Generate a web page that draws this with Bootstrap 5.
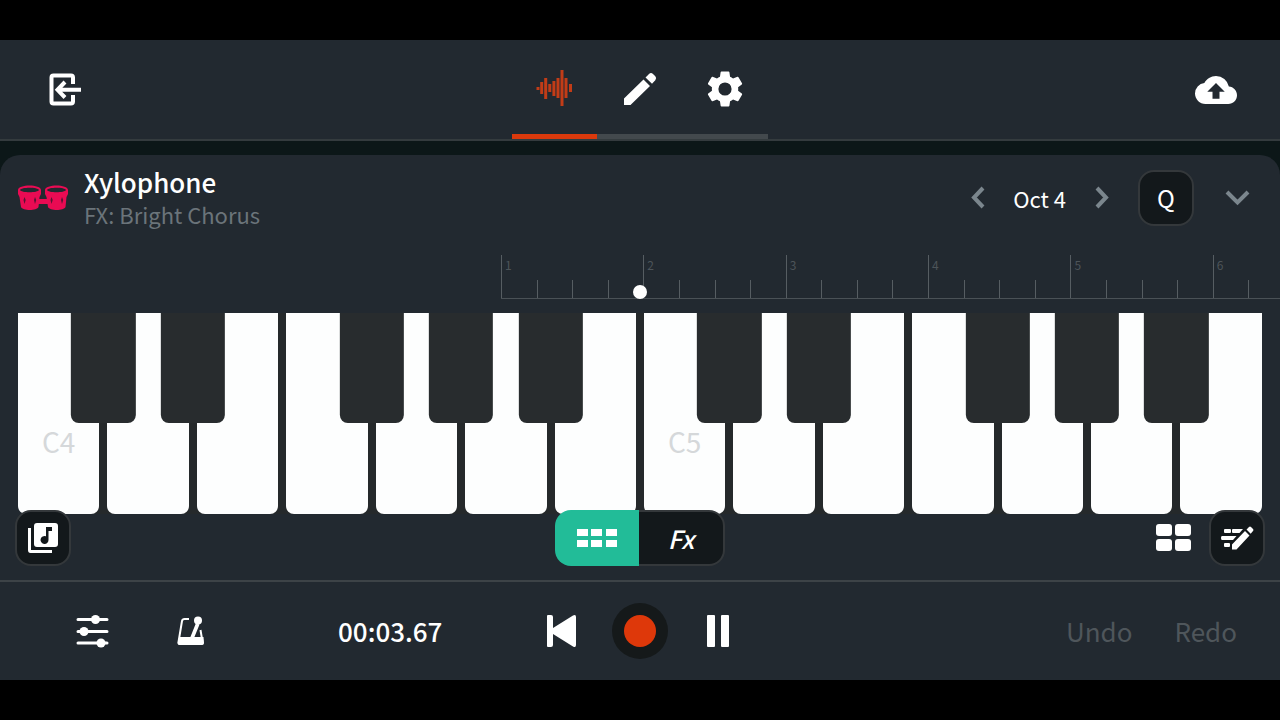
<!DOCTYPE html>
<html lang="en">
<head>
<meta charset="utf-8">
<meta name="viewport" content="width=device-width, initial-scale=1">
<title>Xylophone – Studio</title>
<link href="https://cdn.jsdelivr.net/npm/bootstrap@5.3.0/dist/css/bootstrap.min.css" rel="stylesheet">
<script src="https://cdn.jsdelivr.net/npm/bootstrap@5.3.0/dist/js/bootstrap.bundle.min.js" defer></script>
<style>
  :root { --surface: #222930; --line: #3d4347; --ink: #13181b; --muted: #7b868d; }
  body { background: #000; color: #fff; font-family: "Noto Sans CJK SC", "Noto Sans", sans-serif; line-height: 32px; }
  svg { display: block; fill: currentColor; }
  svg.stroked { fill: none; stroke: currentColor; stroke-width: 4px; }
  .studio { background: #0c1718; }
  .bare { background: none; border: 0; padding: 0; color: inherit; display: flex; align-items: center; justify-content: center; }
  .edge { flex: 1 1 0; }

  .topbar { height: 101px; padding: 0 43px; background: var(--surface); border-bottom: 2px solid #343b3e; }
  .tabs { width: 256px; align-self: stretch; }
  .tabs .bare { flex: 1 1 0; padding-top: 4px; border-bottom: 5px solid #43494d; }
  .tabs .bare.active { color: #c23c17; border-color: #db390c; }

  .panel { margin-top: 14px; background: var(--surface); border-radius: 20px 20px 0 0; }
  .panel-head { padding: 11px 6px 11px 18px; }
  .title { font-size: 26px; font-weight: 500; line-height: 32px; margin: 0; }
  .subtitle { font-size: 22px; line-height: 32px; color: #6b747a; }
  .octave { font-size: 22px; }
  .dim { color: var(--muted); }
  .tile { width: 56px; height: 56px; background: var(--ink); border: 2px solid #34383b; border-radius: 16px; font-size: 24px; }

  .ruler-row { padding-left: 501px; margin-top: 14px; }
  .ruler { position: relative; height: 44px; margin-right: -4px; border-bottom: 1px solid #4a5156; display: grid; grid-template-columns: repeat(22, 1fr); align-items: end; }
  .ruler span { height: 18px; border-left: 1px solid #565d62; font-size: 12px; line-height: 20px; color: #4d5459; padding-left: 3px; }
  .ruler span.bar { height: 43px; }
  .playhead { position: absolute; left: 132px; bottom: -1px; width: 14px; height: 14px; border-radius: 50%; background: #fff; }

  .keys { margin: 14px 18px 0; height: 201px; gap: 8px; background: linear-gradient(#25292b, #25292b) center / calc(100% - 20px) 100% no-repeat; }
  .key { position: relative; flex: 1 1 0; }
  .ivory { width: 100%; height: 100%; border: 0; padding: 0 0 56px; padding-top: 110px; background: #fdfefe; border-radius: 0 0 8px 8px; color: #d5d8da; font-size: 28px; line-height: 36px; }
  .ebony { position: absolute; z-index: 1; top: 0; left: calc(100% + 4px); width: 79%; height: 110px; transform: translateX(-50%); border: 0; padding: 0; background: #282c2e; border-radius: 0 0 8px 8px; }

  .tools { position: relative; z-index: 2; margin-top: -4px; padding: 0 15px 14px; }
  .switcher { width: 170px; height: 56px; }
  .switcher .bare { flex: 1 1 0; font-size: 25px; background: var(--ink); border: 2px solid #34383b; border-left: 0; border-radius: 0 16px 16px 0; }
  .switcher .bare.active { background: #22bc98; border: 0; border-radius: 16px 0 0 16px; }

  .transport { height: 100px; padding: 0 43px 0 72px; background: var(--surface); border-top: 2px solid var(--line); }
  .transport { padding-left: 43px; }
  .mixer { margin-left: 29px; }
  .metronome { margin-left: 64px; }
  .clock { font-size: 26px; font-weight: 500; margin-left: 132px; }
  .deck { gap: 30px; }
  .rec { width: 56px; height: 56px; border-radius: 50%; background: #15191a; }
  .rec::before { content: ""; width: 32px; height: 32px; border-radius: 50%; background: #de380a; }
  .history { font-size: 26px; color: #4f565b; gap: 42px; }
</style>
</head>
<body class="min-vh-100 d-flex flex-column justify-content-center overflow-x-hidden">
<div class="studio overflow-hidden">

  <header class="topbar d-flex align-items-center">
    <div class="edge">
      <button class="bare" aria-label="Exit">
        <svg class="stroked" width="44" height="34" viewBox="-5 0 44 34"><path d="M25 11V4.500Q25 2.500 23 2.500H5.500Q3.500 2.500 3.500 4.500V28.500Q3.500 30.500 5.500 30.500H23Q25 30.500 25 28.500V22M33 16.800H10M17 9L9.500 16.800L17 24.500"/></svg>
      </button>
    </div>
    <nav class="tabs d-flex" aria-label="Views">
      <button class="bare active" aria-label="Sounds">
        <svg width="38" height="38" viewBox="0 0 38 38" stroke="currentColor" stroke-width="3"><path d="M2 17V20M5.700 12V24M9.700 8V29M13.800 14V22M17.900 11V26M22 8V28M26 0V36M30 8V28M34.500 14V22"/></svg>
      </button>
      <button class="bare" aria-label="Edit">
        <svg width="34" height="34" viewBox="0 0 34 34"><path d="M1 26.500L20.500 7.500L27 14L7.500 33H1ZM22.500 5.500L26 2Q28 0 30 2L32.300 4.300Q34 6 32.300 8.300L29 11.800Z"/></svg>
      </button>
      <button class="bare" aria-label="Settings">
        <svg width="44" height="44" viewBox="0 0 24 24"><path fill-rule="evenodd" d="M19.140 12.940c.040-.3.060-.610.060-.940 0-.320-.020-.640-.070-.940l2.030-1.580a.49.49 0 0 0 .12-.610l-1.920-3.320a.49.49 0 0 0-.590-.220l-2.390.96a7 7 0 0 0-1.620-.940l-.360-2.540a.48.48 0 0 0-.480-.410h-3.840a.48.48 0 0 0-.470.410l-.360 2.540a7.300 7.300 0 0 0-1.620.940l-2.390-.960a.49.49 0 0 0-.590.220L2.740 8.870a.49.49 0 0 0 .12.610l2.030 1.580a6 6 0 0 0 0 1.880l-2.030 1.580a.49.49 0 0 0-.12.610l1.920 3.320c.12.22.37.29.59.22l2.390-.960c.5.380 1.030.7 1.620.940l.36 2.540c.05.24.24.41.48.41h3.840c.24 0 .44-.170.470-.410l.36-2.540a7.300 7.300 0 0 0 1.620-.940l2.390.960c.22.08.47 0 .59-.220l1.920-3.320a.49.49 0 0 0-.12-.610zM12 15.600a3.600 3.600 0 1 1 0-7.200 3.600 3.600 0 0 1 0 7.200z"/></svg>
      </button>
    </nav>
    <div class="edge d-flex justify-content-end">
      <button class="bare" aria-label="Upload">
        <svg width="42" height="42" viewBox="0 0 24 24"><path d="M19.350 10.040A7.490 7.490 0 0 0 12 4C9.110 4 6.600 5.640 5.350 8.040A5.994 5.994 0 0 0 0 14c0 3.310 2.690 6 6 6h13c2.760 0 5-2.240 5-5 0-2.640-2.050-4.780-4.650-4.960zM14 13v4h-4v-4H7l5-5 5 5h-3z"/></svg>
      </button>
    </div>
  </header>

  <main class="panel">
    <div class="panel-head d-flex align-items-center">
      <svg width="50" height="28" viewBox="0 0 50 28" color="#e90b53" aria-hidden="true">
        <g id="drum"><path fill-rule="evenodd" d="M0 6C0 0 23 0 23 6V10L21.500 13L20.500 23C19 27 4.500 27 3 23L1.500 13L0 10ZM2 6C3 9 20 9 21 6C20 3 3 3 2 6Z"/><path d="M6.500 13l1.200 3-1.200 4-1-4ZM17 13l1.200 3-1.200 4-1-4Z" fill="#5a1434"/></g>
        <use href="#drum" x="27"/><path d="M20 15h10v5H20z"/>
      </svg>
      <div class="ms-3 flex-grow-1">
        <h1 class="title">Xylophone</h1>
        <div class="subtitle">FX: Bright Chorus</div>
      </div>
      <button class="bare dim" aria-label="Octave down"><svg class="stroked" width="28" height="28" viewBox="0 0 28 28"><path d="M18 4L9 13.500L18 23"/></svg></button>
      <span class="octave mx-3 px-1">Oct 4</span>
      <button class="bare dim" aria-label="Octave up"><svg class="stroked" width="28" height="28" viewBox="0 0 28 28"><path d="M11 4L20 13.500L11 23"/></svg></button>
      <button class="bare tile ms-4" aria-label="Quantize">Q</button>
      <button class="bare dim ms-4" aria-label="Collapse"><svg class="stroked" width="56" height="28" viewBox="0 0 56 28"><path d="M9 8L19.500 18.500L30 8"/></svg></button>
    </div>

    <div class="ruler-row">
      <div class="ruler">
        <span class="bar">1</span><span></span><span></span><span></span>
        <span class="bar">2</span><span></span><span></span><span></span>
        <span class="bar">3</span><span></span><span></span><span></span>
        <span class="bar">4</span><span></span><span></span><span></span>
        <span class="bar">5</span><span></span><span></span><span></span>
        <span class="bar">6</span><span></span>
        <div class="playhead"></div>
      </div>
    </div>

    <div class="keys d-flex">
      <div class="key"><button class="ivory">C4</button><button class="ebony" aria-label="C sharp 4"></button></div>
      <div class="key"><button class="ivory" aria-label="D4"></button><button class="ebony" aria-label="D sharp 4"></button></div>
      <div class="key"><button class="ivory" aria-label="E4"></button></div>
      <div class="key"><button class="ivory" aria-label="F4"></button><button class="ebony" aria-label="F sharp 4"></button></div>
      <div class="key"><button class="ivory" aria-label="G4"></button><button class="ebony" aria-label="G sharp 4"></button></div>
      <div class="key"><button class="ivory" aria-label="A4"></button><button class="ebony" aria-label="A sharp 4"></button></div>
      <div class="key"><button class="ivory" aria-label="B4"></button></div>
      <div class="key"><button class="ivory">C5</button><button class="ebony" aria-label="C sharp 5"></button></div>
      <div class="key"><button class="ivory" aria-label="D5"></button><button class="ebony" aria-label="D sharp 5"></button></div>
      <div class="key"><button class="ivory" aria-label="E5"></button></div>
      <div class="key"><button class="ivory" aria-label="F5"></button><button class="ebony" aria-label="F sharp 5"></button></div>
      <div class="key"><button class="ivory" aria-label="G5"></button><button class="ebony" aria-label="G sharp 5"></button></div>
      <div class="key"><button class="ivory" aria-label="A5"></button><button class="ebony" aria-label="A sharp 5"></button></div>
      <div class="key"><button class="ivory" aria-label="B5"></button></div>
    </div>

    <div class="tools d-flex align-items-center">
      <div class="edge">
        <button class="bare tile" aria-label="Sound library">
          <svg width="32" height="32" viewBox="0 0 32 32"><path fill-rule="evenodd" d="M10 1H28Q31 1 31 4V22Q31 25 28 25H10Q7 25 7 22V4Q7 1 10 1ZM19 5V14.200A4 4 0 1 0 21.500 17.500V9H25V5Z"/><path d="M1 6H4V28H25V31H3.500Q1 31 1 28Z"/></svg>
        </button>
      </div>
      <div class="switcher d-flex">
        <button class="bare active" aria-label="Keys"><svg width="40" height="20" viewBox="0 0 40 20"><path d="M0 1h11v7H0zM14 1h11v7H14zM29 1h11v7H29zM0 12h11v7H0zM14 12h11v7H14zM29 12h11v7H29z"/></svg></button>
        <button class="bare fst-italic fw-medium">Fx</button>
      </div>
      <div class="edge d-flex justify-content-end align-items-center gap-3">
        <button class="bare" aria-label="Pads"><svg width="38" height="28" viewBox="0 0 38 28"><rect x="1" width="16" height="12" rx="3"/><rect x="20" width="16" height="12" rx="3"/><rect x="1" y="15" width="16" height="12" rx="3"/><rect x="20" y="15" width="16" height="12" rx="3"/></svg></button>
        <button class="bare tile" aria-label="Edit notes">
          <svg width="34" height="26" viewBox="0 0 34 26"><path d="M12 19.500L25 6L29.500 10.500L16.500 24.500H12ZM26.500 4.500L29 2Q30 1 31 2L33 4Q34 5 33 6L30.700 8.700ZM5 4h5q1 0 1 1v2q0 1-1 1H5Q4 8 4 7V5Q4 4 5 4ZM13 4H23L19.500 8H13Q12 8 12 7V5Q12 4 13 4ZM2 11H16.500L13 15H2Q1 15 1 13T2 11ZM5 18H9q1 0 1 1v2q0 1-1 1H5Q4 22 4 21V19Q4 18 5 18Z"/></svg>
        </button>
      </div>
    </div>
  </main>

  <footer class="transport d-flex align-items-center">
    <div class="edge d-flex align-items-center">
      <button class="bare mixer" aria-label="Mixer">
        <svg width="40" height="34" viewBox="0 0 40 34"><path d="M6 5.500H35M6 17.500H35M6 29H35" stroke="currentColor" stroke-width="3" stroke-linecap="round"/><circle cx="23.500" cy="5.500" r="4.500"/><circle cx="12" cy="17.500" r="4.500"/><circle cx="29" cy="29" r="4.500"/></svg>
      </button>
      <button class="bare metronome" aria-label="Metronome">
        <svg width="30" height="30" viewBox="0 0 30 30"><path d="M13 3H8.500Q6.500 3 6 5L2.500 26Q2.500 28 4.500 28H24.500Q27 28 26.500 26L24.500 14" fill="none" stroke="currentColor" stroke-width="2"/><path d="M3.500 21H27.500L28 27Q28 29 26 29H3.500Q1.500 29 1.500 27ZM14 22L20 7L23.500 8.500L18 22Z"/><circle cx="22" cy="4.500" r="4"/></svg>
      </button>
      <span class="clock">00:03.67</span>
    </div>
    <div class="deck d-flex align-items-center">
      <button class="bare" aria-label="Back to start"><svg width="40" height="34" viewBox="0 0 40 34"><path d="M6 1h3q2 0 2 2V14L31 1.500Q34 0 34 3V31Q34 34 31 32.500L11 20V31q0 2-2 2H6q-1 0-1-1V2Q5 1 6 1Z"/></svg></button>
      <button class="bare rec" aria-label="Record"></button>
      <button class="bare" aria-label="Pause"><svg width="40" height="34" viewBox="0 0 40 34"><rect x="9" y="1" width="8" height="32" rx="1"/><rect x="23" y="1" width="8" height="32" rx="1"/></svg></button>
    </div>
    <div class="edge history d-flex justify-content-end">
      <button class="bare">Undo</button>
      <button class="bare">Redo</button>
    </div>
  </footer>
</div>
</body>
</html>
